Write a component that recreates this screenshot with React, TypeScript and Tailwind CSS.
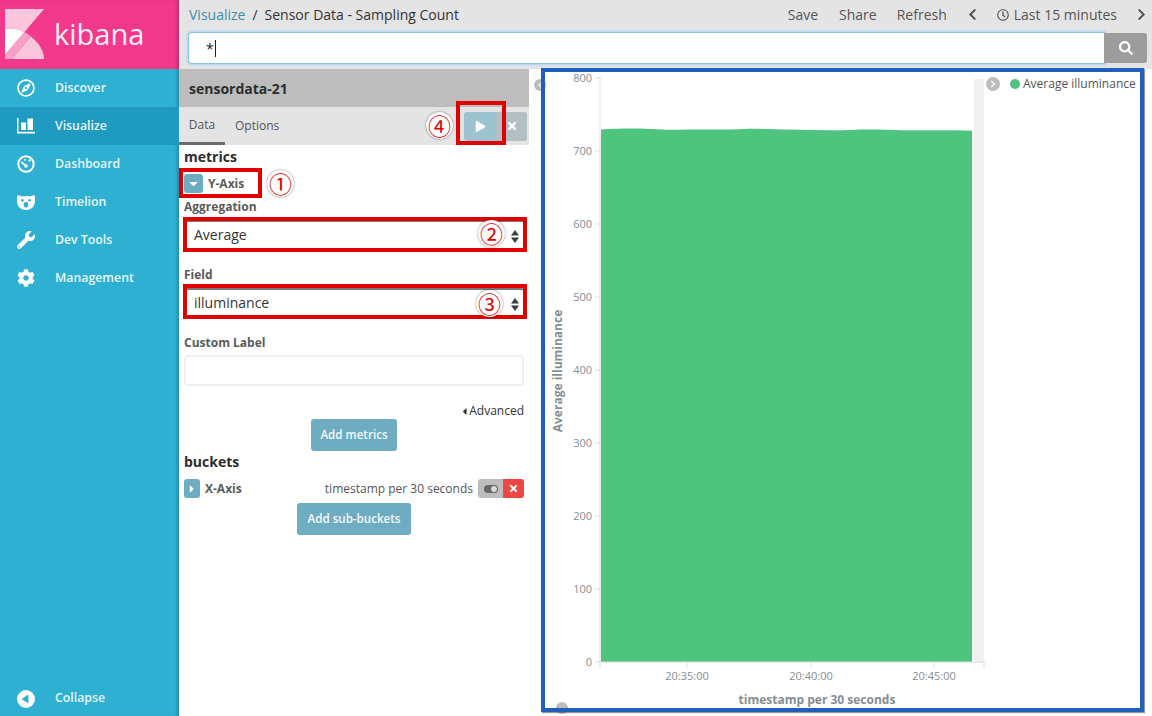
import React from 'react'
import { FaRegCompass, FaWrench, FaCog, FaChevronLeft, FaChevronRight, FaSearch, FaRegClock, FaTimes, FaPlay, FaCaretDown, FaCaretRight, FaCaretLeft } from 'react-icons/fa'

const font = { fontFamily: '"Open Sans", sans-serif' }

const KibanaLogo = () => (
  <svg width="40" height="51" viewBox="0 0 40 51">
    <path d="M0 0H39L19.500 23C14 20 7 19 0 19.500Z" fill="#fbc5dc" />
    <path d="M0 19.500C7 19 14 20 19.500 23L0 46Z" fill="#fff" />
    <path d="M19.500 23C22.500 24.500 25 26.500 26 27.500L7 50H0V46Z" fill="#f9a0c6" />
    <path d="M26 27.500C34 34 39 42 39 50H7Z" fill="#fbc5dc" />
  </svg>
)

const BarsIcon = () => (
  <svg width="18" height="16" viewBox="0 0 18 16" fill="#fff">
    <path d="M0 0H1.500V13.700H18V15.500H0Z" />
    <rect x="4" y="4.500" width="5" height="7.500" />
    <rect x="10.500" y="0.500" width="5.500" height="11.500" />
  </svg>
)

const DashIcon = () => (
  <svg width="18" height="18" viewBox="0 0 18 18" fill="none">
    <circle cx="9" cy="9" r="7.700" stroke="#fff" strokeWidth="2" />
    <circle cx="12.500" cy="5.500" r="1.300" fill="#fff" />
    <circle cx="8" cy="4.800" r="1" fill="#fff" />
    <path d="M5 7.500L8.500 10.500" stroke="#fff" strokeWidth="1.800" strokeLinecap="round" />
    <circle cx="9" cy="11" r="1.800" fill="#fff" />
  </svg>
)

const BearIcon = () => (
  <svg width="18" height="15" viewBox="0 0 18 15">
    <path d="M0 1.500C0 .5 1 0 2 .5L4 1.200H14L16 .5C17 0 18 .5 18 1.500V6C18 11 14.500 15 9 15S0 11 0 6Z" fill="#fff" />
    <circle cx="5.400" cy="5.200" r="1.300" fill="#2eb0d2" />
    <circle cx="12.600" cy="5.200" r="1.300" fill="#2eb0d2" />
    <ellipse cx="9" cy="9.800" rx="2.300" ry="2.800" fill="#2eb0d2" />
  </svg>
)

const CollapseIcon = () => (
  <svg width="18" height="18" viewBox="0 0 18 18">
    <circle cx="9" cy="9" r="9" fill="#fff" />
    <path d="M4.600 9L11.400 4.600V13.400Z" fill="#2eb0d2" />
  </svg>
)

const SortIcon = () => (
  <svg width="8" height="13" viewBox="0 0 8 13" fill="#3d3d3d">
    <path d="M4 0L8 5.500H0Z" />
    <path d="M0 7.500H8L4 13Z" />
  </svg>
)

const navItems = [
  { label: 'Discover', icon: <FaRegCompass size={18} /> },
  { label: 'Visualize', icon: <BarsIcon />, active: true },
  { label: 'Dashboard', icon: <DashIcon /> },
  { label: 'Timelion', icon: <BearIcon /> },
  { label: 'Dev Tools', icon: <FaWrench size={18} /> },
  { label: 'Management', icon: <FaCog size={18} /> },
]

const Sidebar = () => (
  <aside className="relative flex h-full w-[179px] shrink-0 flex-col bg-[#2eb0d2] shadow-[inset_-3px_0_3px_-1px_rgba(0,0,0,0.2)]">
    <div className="flex h-[69px] items-center bg-[#f2398b] pl-[5px] pr-[3px] shadow-[inset_-3px_0_3px_-1px_rgba(0,0,0,0.2)]">
      <KibanaLogo />
      <span className="ml-[9px] pb-[2px] text-[29px] leading-none text-[#fdeef5]">kibana</span>
    </div>
    {navItems.map(item => (
      <div key={item.label} className={`flex h-[38px] items-center pr-[3px] text-[#e9f7fb] ${item.active ? 'bg-[#1f9ac1]' : ''}`}>
        <div className="flex w-[55px] justify-center pr-[3px] text-white">{item.icon}</div>
        <span className="text-[12.3px] font-semibold">{item.label}</span>
      </div>
    ))}
    <div className="mt-auto flex h-[38px] items-center pt-[3px] text-[#e9f7fb]">
      <div className="flex w-[55px] justify-center pr-[3px]"><CollapseIcon /></div>
      <span className="text-[12.3px] font-semibold">Collapse</span>
    </div>
  </aside>
)

const TopBar = () => (
  <div className="h-[69px] shrink-0 bg-[#e4e4e4] pl-[10px] pr-[5px]">
    <div className="flex h-[33px] items-center pb-[4px] text-[14px] text-[#444]">
      <span className="text-[#3f8ea8]">Visualize</span>
      <span className="mx-[7px] text-[#333]">/</span>
      <span className="text-[#333]">Sensor Data - Sampling Count</span>
      <div className="ml-auto flex items-center text-[#555]">
        <span>Save</span>
        <span className="ml-[21px]">Share</span>
        <span className="ml-[20px]">Refresh</span>
        <FaChevronLeft className="ml-[19px]" size={13} />
        <FaRegClock className="ml-[18px] mr-[5px]" size={12} />
        <span>Last 15 minutes</span>
        <FaChevronRight className="ml-[18px] mr-[-1px]" size={13} />
      </div>
    </div>
    <div className="flex h-[30px]">
      <div className="flex flex-1 items-center rounded-l-[3px] bg-white pl-[17px] text-[14px] text-[#222] shadow-[0_0_0_1px_#8fc1f0,0_0_0_2.5px_#bcd9f5]">
        <span>*</span><span className="ml-px h-[17px] w-px bg-[#222]" />
      </div>
      <div className="z-10 flex w-[43px] items-center justify-center rounded-r-[3px] bg-[#9c9c9c] text-white">
        <FaSearch size={14} />
      </div>
    </div>
  </div>
)

const Label = ({ children }: { children: React.ReactNode }) => (
  <div className="text-[12px] font-bold leading-[16px] text-[#5a5a5a]">{children}</div>
)

const SelectBox = ({ value }: { value: string }) => (
  <div className="flex h-[30px] items-center justify-between rounded-[3px] border-t-2 border-[#777] bg-white pb-[3px] pl-[10px] pr-[5px] text-[14px] text-[#333]">
    <span>{value}</span>
    <div className="pt-[3px]"><SortIcon /></div>
  </div>
)

const Editor = () => (
  <div className="h-full w-[350px] shrink-0 bg-white">
    <div className="flex h-[38px] items-center bg-[#bdbdbd] pl-[10px] text-[14px] font-bold text-[#2d2d2d]">sensordata-21</div>
    <div className="flex h-[38px] items-center bg-[#e4e4e4] pr-[2px] text-[12px] text-[#555]">
      <div className="flex h-[38px] w-[46px] items-center justify-center border-b-[3px] border-[#6b6b6b]">Data</div>
      <div className="ml-[10px]">Options</div>
      <div className="ml-auto flex h-[29px] overflow-hidden rounded-[3px] text-white">
        <div className="flex w-[32px] items-center justify-center bg-[#9cc3d0]"><FaPlay size={11} /></div>
        <div className="flex w-[31px] items-center justify-center bg-[#b2c0c3]"><FaTimes size={12} /></div>
      </div>
    </div>
    <div className="pl-[5px] pr-[5px]">
      <div className="mt-[2px] text-[14px] font-bold leading-[19px] text-[#2d2d2d]">metrics</div>
      <div className="mt-[8px] flex items-center">
        <div className="flex h-[19px] w-[19px] items-center justify-center rounded-[3px] bg-[#6eadc1] text-white"><FaCaretDown size={13} /></div>
        <span className="ml-[5px] text-[12px] font-bold text-[#5a5a5a]">Y-Axis</span>
      </div>
      <div className="mt-[6px]"><Label>Aggregation</Label></div>
      <div className="mt-[5px]"><SelectBox value="Average" /></div>
      <div className="mt-[17px]"><Label>Field</Label></div>
      <div className="mt-[5px]"><SelectBox value="illuminance" /></div>
      <div className="mt-[17px]"><Label>Custom Label</Label></div>
      <div className="mt-[4px] h-[31px] rounded-[4px] border-2 border-[#ecf0f1] bg-white" />
      <div className="mt-[16px] flex items-center justify-end text-[12px] leading-[18px] text-[#333]">
        <FaCaretLeft size={11} className="mr-[-1px]" />Advanced
      </div>
      <div className="-mt-px flex justify-center">
        <div className="flex h-[32px] w-[86px] items-center justify-center rounded-[3px] bg-[#6eadc1] text-[11.6px] font-semibold text-[#f3f9fb]">Add metrics</div>
      </div>
      <div className="text-[14px] font-bold leading-[21px] text-[#2d2d2d]">buckets</div>
      <div className="mt-[7px] flex h-[19px] items-center">
        <div className="flex h-[19px] w-[16px] items-center justify-center rounded-[3px] bg-[#6eadc1] text-white"><FaCaretRight size={12} /></div>
        <span className="ml-[5px] text-[12px] font-bold text-[#5a5a5a]">X-Axis</span>
        <span className="ml-auto text-[12px] text-[#555]">timestamp per 30 seconds</span>
        <div className="ml-[5px] flex h-[19px] overflow-hidden rounded-[3px]">
          <div className="flex w-[25px] items-center justify-center bg-[#bdbdbd]">
            <div className="relative h-[8px] w-[14px] rounded-full bg-[#666]"><div className="absolute right-0 top-0 h-[8px] w-[8px] rounded-full border border-[#666] bg-[#ddd]" /></div>
          </div>
          <div className="flex w-[21px] items-center justify-center bg-[#ef4444] text-white"><FaTimes size={11} /></div>
        </div>
      </div>
      <div className="mt-[5px] flex justify-center">
        <div className="flex h-[32px] w-[114px] items-center justify-center rounded-[3px] bg-[#6eadc1] text-[11.6px] font-semibold text-[#f3f9fb]">Add sub-buckets</div>
      </div>
    </div>
  </div>
)

const yTicks = [800, 700, 600, 500, 400, 300, 200, 100, 0]
const xTicks = [{ x: 687, label: '20:35:00' }, { x: 811, label: '20:40:00' }, { x: 934, label: '20:45:00' }]

// viewBox keeps the page coordinates of the chart pane
const Chart = () => (
  <svg width="456" height="647" viewBox="530 69 456 647" className="shrink-0" style={font}>
    <rect x="974" y="79" width="10" height="583" fill="#f1f1f1" />
    <path d="M601 129.500C615 128.700 630 128.300 645 128.700C660 129.200 665 130 680 129.700C700 129.200 720 130 740 129.200C755 128.500 770 129 790 129.500C810 129.900 830 130.500 850 129.900C870 129.200 880 129.500 900 130.200C920 130.700 940 129.700 972 130.700V662H601Z" fill="#4fc47f" />
    <path d="M600 78V668M600 662H984M984 662V668" stroke="#ddd" strokeWidth="1" fill="none" />
    {yTicks.map((t, i) => {
      const y = 78 + i * 73
      return (
        <g key={t}>
          <line x1="595" x2="600" y1={y} y2={y} stroke="#ddd" />
          <text x="592" y={y + 4} textAnchor="end" fontSize="11" fill="#848e96">{t}</text>
        </g>
      )
    })}
    {xTicks.map(t => (
      <g key={t.x}>
        <line x1={t.x} x2={t.x} y1="662" y2="668" stroke="#ddd" />
        <text x={t.x} y="680" textAnchor="middle" fontSize="11" fill="#848e96">{t.label}</text>
      </g>
    ))}
    <text x="0" y="0" transform="translate(562 371) rotate(-90)" textAnchor="middle" fontSize="12" fontWeight="700" fill="#848e96">Average illuminance</text>
    <text x="817" y="704" textAnchor="middle" fontSize="12" fontWeight="700" fill="#848e96">timestamp per 30 seconds</text>
  </svg>
)

const Legend = () => (
  <div className="flex h-[29px] flex-1 items-center text-[12px] text-[#555]">
    <div className="flex h-[14px] w-[14px] items-center justify-center rounded-full bg-[#bdbdbd] text-white"><FaChevronRight size={8} /></div>
    <div className="ml-[10px] h-[10px] w-[10px] rounded-full bg-[#4fc47f]" />
    <span className="ml-[3px]">Average illuminance</span>
  </div>
)

const Mark = ({ className }: { className: string }) => (
  <div className={`absolute border-[4px] border-[#e00000] ${className}`} />
)

const Num = ({ className, n }: { className: string; n: string }) => (
  <div
    className={`absolute flex h-[27px] w-[27px] items-center justify-center rounded-full bg-white text-[23px] leading-none text-[#e00000] shadow-[0_0_2px_rgba(0,0,0,0.55)] ${className}`}
    style={{ fontFamily: '"Noto Sans CJK JP", sans-serif' }}
  >
    {n}
  </div>
)

export default function App() {
  return (
    <div className="relative flex h-[716px] w-[1152px] overflow-hidden bg-white" style={font}>
      <Sidebar />
      <div className="flex min-w-0 flex-1 flex-col">
        <TopBar />
        <div className="flex flex-1">
          <Editor />
          <div className="relative flex flex-1">
            <div className="w-px" />
            <Chart />
            <Legend />
          </div>
        </div>
      </div>

      {/* little handles peeking out from under the blue frame */}
      <div className="absolute left-[534px] top-[79px] flex h-[12px] w-[12px] items-center justify-center rounded-full bg-[#bdbdbd] text-white"><FaChevronLeft size={6} /></div>
      <div className="absolute left-[556px] top-[702px] h-[12px] w-[12px] rounded-full bg-[#bdbdbd]" />

      {/* annotations on top of the screenshot */}
      <div className="absolute left-[541px] top-[68px] h-[644px] w-[603px] border-[4px] border-[#1f60bd] shadow-[1px_1px_1px_rgba(0,0,0,0.4)]" />
      <Mark className="left-[179px] top-[168px] h-[30px] w-[83px]" />
      <Mark className="left-[456px] top-[101px] h-[44px] w-[50px]" />
      <Mark className="left-[183px] top-[217px] h-[35px] w-[344px]" />
      <Mark className="left-[183px] top-[284px] h-[35px] w-[344px]" />
      <Num className="left-[267px] top-[170px]" n="①" />
      <Num className="left-[478px] top-[220px]" n="②" />
      <Num className="left-[476px] top-[290px]" n="③" />
      <Num className="left-[426px] top-[112px]" n="④" />
    </div>
  )
}
